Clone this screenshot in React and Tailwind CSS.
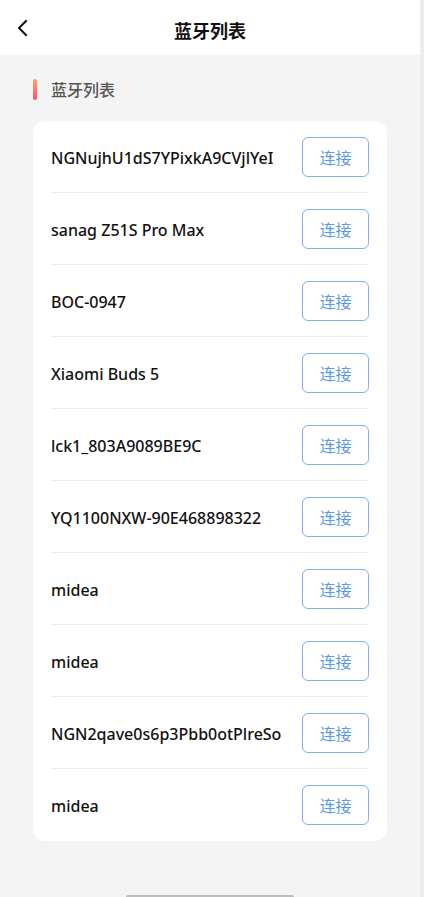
import React from 'react';

const devices = [
  'NGNujhU1dS7YPixkA9CVjlYeI',
  'sanag Z51S Pro Max',
  'BOC-0947',
  'Xiaomi Buds 5',
  'lck1_803A9089BE9C',
  'YQ1100NXW-90E468898322',
  'midea',
  'midea',
  'NGN2qave0s6p3Pbb0otPlreSo',
  'midea',
];

const App = () => {
  return (
    <div
      className="flex w-[424px] h-[897px] overflow-hidden bg-[#f4f4f4]"
      style={{ fontFamily: '"Noto Sans CJK SC", "Noto Sans", sans-serif' }}
    >
      <div className="w-[420px] flex flex-col">
        {/* header */}
        <div className="relative h-[55px] bg-white flex items-center justify-center">
          <svg className="absolute left-[16px] top-[19px]" width="14" height="18" viewBox="0 0 14 18" fill="none">
            <path d="M10 2 L3 9 L10 16" stroke="#111" strokeWidth="2" strokeLinecap="square" />
          </svg>
          <div className="text-[18px] font-bold text-[#111] leading-none mt-[4px]">蓝牙列表</div>
        </div>

        {/* section title */}
        <div className="flex items-center h-[66px] pl-[33px] pt-[2px]">
          <div className="w-[4px] h-[21px] rounded-full bg-gradient-to-b from-[#ffa36a] to-[#ff4b6e]" />
          <div className="ml-[14px] text-[16px] text-[#555] font-medium">蓝牙列表</div>
        </div>

        {/* list card */}
        <div className="mx-[33px] bg-white rounded-[12px] px-[18px]">
          {devices.map((name, i) => (
            <div
              key={i}
              className={`flex items-center justify-between h-[72px] ${i < devices.length - 1 ? 'border-b border-[#ececec]' : ''}`}
            >
              <span
                className="text-[16px] text-[#111] font-medium whitespace-nowrap overflow-hidden pt-[2px]"
                style={{ fontFamily: '"Noto Sans", sans-serif' }}
              >
                {name}
              </span>
              <button className="shrink-0 ml-[4px] w-[67px] h-[40px] rounded-[6px] border border-[#7fb0ef] text-[#5a9be6] text-[16px] flex items-center justify-center">
                连接
              </button>
            </div>
          ))}
        </div>

        <div className="flex-1" />
        <div className="flex justify-center">
          <div className="w-[168px] h-[2px] bg-[#bdbdbd] rounded-t" />
        </div>
      </div>
      <div className="w-[4px] bg-[#ededed]" />
    </div>
  );
};

export default App;
